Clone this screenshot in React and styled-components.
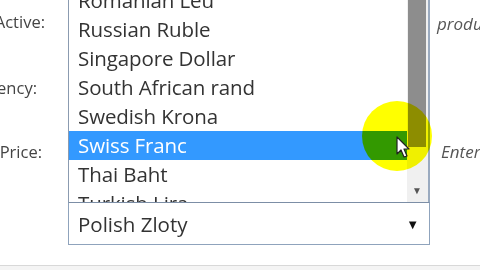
import React from 'react';
import styled, { createGlobalStyle } from 'styled-components';

const GlobalStyle = createGlobalStyle`
  html, body {
    margin: 0;
    padding: 0;
    background: #ffffff;
  }
  body {
    font-family: 'Open Sans', 'Liberation Sans', sans-serif;
  }
`;

const Page = styled.div`
  width: 480px;
  height: 270px;
  overflow: hidden;
  display: flex;
  flex-direction: column;
  background: #ffffff;
`;

const Form = styled.div`
  height: 265px;
  display: grid;
  grid-template-columns: 68px 362px 1fr;
  align-items: start;
`;

const LabelColumn = styled.div`
  display: flex;
  flex-direction: column;
  padding-top: 10px;
`;

const Label = styled.div`
  height: ${p => p.h}px;
  display: flex;
  justify-content: flex-end;
  padding-right: ${p => p.end}px;
  font-size: 16.5px;
  color: #444;
  white-space: nowrap;
`;

const HintColumn = styled.div`
  display: flex;
  flex-direction: column;
  padding-left: ${p => p.pad}px;
  padding-top: 12px;
`;

const Hint = styled.div`
  height: ${p => p.h}px;
  padding-left: ${p => p.indent || 0}px;
  font-size: 17px;
  font-style: italic;
  color: #555;
  white-space: nowrap;
`;

const FieldColumn = styled.div`
  display: flex;
  flex-direction: column;
  position: relative;
`;

const ListBox = styled.div`
  margin-top: -14px;
  height: 216px;
  display: flex;
  border-left: 1px solid #8b9bb0;
  border-right: 2px solid #9aaabf;
  background: #fff;
  box-sizing: border-box;
`;

const Options = styled.div`
  flex: 1;
  display: flex;
  flex-direction: column;
  overflow: hidden;
`;

const Option = styled.div`
  height: 29px;
  flex: none;
  display: flex;
  align-items: center;
  padding-left: 9px;
  padding-bottom: 2px;
  box-sizing: border-box;
  font-size: 20.5px;
  letter-spacing: -0.1px;
  color: ${p => (p.selected ? '#ffffff' : '#333333')};
  background: ${p => (p.selected ? '#3399ff' : 'transparent')};
  white-space: nowrap;
`;

const ScrollBar = styled.div`
  width: 20px;
  display: flex;
  flex-direction: column;
  background: #f0f0f0;
  padding-right: 1px;
`;

const Thumb = styled.div`
  height: 161px;
  margin: 0 1px;
  background: #8d8d8d;
`;

const Track = styled.div`
  flex: 1;
`;

const ArrowButton = styled.div`
  height: 24px;
  display: flex;
  align-items: center;
  justify-content: center;
  font-size: 10px;
  color: #555;
`;

const Select = styled.div`
  height: 43px;
  box-sizing: border-box;
  border: 1px solid #8fa3bc;
  border-top-color: #7c8ea6;
  display: flex;
  align-items: center;
  justify-content: space-between;
  padding: 0 10px 0 9px;
  font-size: 20.5px;
  color: #333;
  background: #fff;
`;

const Caret = styled.span`
  font-size: 13px;
  color: #111;
`;

const Spotlight = styled.div`
  position: absolute;
  left: 294px;
  top: 101px;
  width: 70px;
  height: 70px;
  border-radius: 50%;
  background: #ffff00;
  mix-blend-mode: multiply;
  pointer-events: none;
`;

const Pointer = styled.svg`
  position: absolute;
  left: 328px;
  top: 136px;
  width: 16px;
  height: 24px;
`;

const Footer = styled.div`
  flex: 1;
  border-top: 1px solid #d8d8d8;
  background: #f4f4f4;
`;

const currencies = [
  'Romanian Leu',
  'Russian Ruble',
  'Singapore Dollar',
  'South African rand',
  'Swedish Krona',
  'Swiss Franc',
  'Thai Baht',
  'Turkish Lira',
];

export default function App() {
  return (
    <Page>
      <GlobalStyle />
      <Form>
        <LabelColumn>
          <Label h={66} end={23}>Active:</Label>
          <Label h={64} end={31}>Currency:</Label>
          <Label h={40} end={26}>Price:</Label>
        </LabelColumn>

        <FieldColumn>
          <ListBox>
            <Options>
              {currencies.map(name => (
                <Option key={name} selected={name === 'Swiss Franc'}>
                  {name}
                </Option>
              ))}
            </Options>
            <ScrollBar>
              <Thumb />
              <Track />
              <ArrowButton>▼</ArrowButton>
            </ScrollBar>
          </ListBox>
          <Select>
            <span>Polish Zloty</span>
            <Caret>▼</Caret>
          </Select>
          <Spotlight />
          <Pointer viewBox="0 0 16 24">
            <path
              d="M1 1 L1 18 L5 14 L8 21 L11 20 L8 13 L13 13 Z"
              fill="#ffffff"
              stroke="#222"
              strokeWidth="1.2"
              strokeLinejoin="round"
            />
          </Pointer>
        </FieldColumn>

        <HintColumn pad={7}>
          <Hint h={128}>product</Hint>
          <Hint h={30} indent={4}>Enter price</Hint>
        </HintColumn>
      </Form>
      <Footer />
    </Page>
  );
}
